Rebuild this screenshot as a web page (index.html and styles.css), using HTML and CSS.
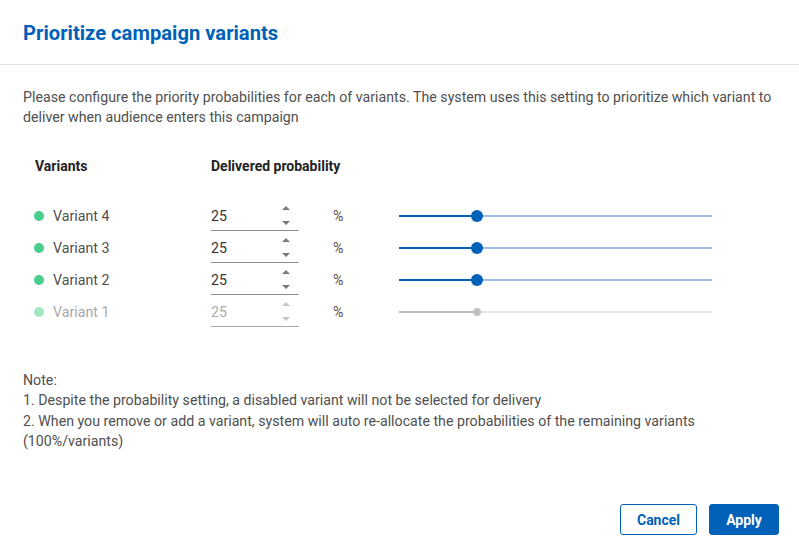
FILE: index.html
```html
<!DOCTYPE html>
<html>
<head>
<meta charset="utf-8">
<link rel="stylesheet" href="styles.css">
</head>
<body>
<div class="dialog">
  <div class="header"><h1 class="title">Prioritize campaign variants</h1></div>
  <div class="content">
    <p class="intro">Please configure the priority probabilities for each of variants. The system uses this setting to prioritize which variant to deliver when audience enters this campaign</p>
    <div class="table-head">
      <div class="col-name">Variants</div>
      <div class="col-prob">Delivered probability</div>
    </div>
    <div class="rows">
      <div class="row">
        <div class="col-name"><span class="dot"></span>Variant 4</div>
        <div class="col-prob input"><span class="val">25</span><span class="spin"><i class="up"></i><i class="down"></i></span></div>
        <div class="col-pct">%</div>
        <div class="slider"><span class="fill" style="width:25%"></span><span class="thumb" style="left:25%"></span></div>
      </div>
      <div class="row">
        <div class="col-name"><span class="dot"></span>Variant 3</div>
        <div class="col-prob input"><span class="val">25</span><span class="spin"><i class="up"></i><i class="down"></i></span></div>
        <div class="col-pct">%</div>
        <div class="slider"><span class="fill" style="width:25%"></span><span class="thumb" style="left:25%"></span></div>
      </div>
      <div class="row">
        <div class="col-name"><span class="dot"></span>Variant 2</div>
        <div class="col-prob input"><span class="val">25</span><span class="spin"><i class="up"></i><i class="down"></i></span></div>
        <div class="col-pct">%</div>
        <div class="slider"><span class="fill" style="width:25%"></span><span class="thumb" style="left:25%"></span></div>
      </div>
      <div class="row disabled">
        <div class="col-name"><span class="dot"></span>Variant 1</div>
        <div class="col-prob input"><span class="val">25</span><span class="spin"><i class="up"></i><i class="down"></i></span></div>
        <div class="col-pct">%</div>
        <div class="slider"><span class="fill" style="width:25%"></span><span class="thumb" style="left:25%"></span></div>
      </div>
    </div>
    <div class="note">
      <div>Note:</div>
      <div>1. Despite the probability setting, a disabled variant will not be selected for delivery</div>
      <div>2. When you remove or add a variant, system will auto re-allocate the probabilities of the remaining variants (100%/variants)</div>
    </div>
  </div>
  <div class="footer">
    <button class="btn btn-outline">Cancel</button>
    <button class="btn btn-primary">Apply</button>
  </div>
</div>
</body>
</html>
```

FILE: styles.css
```css
* { box-sizing: border-box; }
html, body { margin: 0; padding: 0; background: #fff; }
body { font-family: Roboto, "Noto Sans", Arial, sans-serif; color: #505050; font-size: 14.2px; }
.dialog { width: 799px; height: 552px; display: flex; flex-direction: column; }
.header { height: 65px; border-bottom: 1px solid #e3e3e3; padding: 21px 23px 0; }
.title { margin: 0; font-size: 20.2px; line-height: 24px; font-weight: 700; color: #0061b8; }
.content { padding: 0 23px; }
.intro { margin: 22px 0 0; line-height: 20px; }
.table-head { display: flex; margin-top: 29px; line-height: 20px; font-size: 14px; font-weight: 700; color: #222; }
.table-head .col-name { padding-left: 12px; }
.table-head .col-prob { white-space: nowrap; }
.col-name { width: 188px; display: flex; align-items: center; }
.col-prob { width: 88px; }
.rows { margin-top: 23px; }
.row { display: flex; align-items: center; height: 32px; }
.row .col-name { padding-left: 11px; height: 32px; padding-top: 1px; }
.dot { width: 10px; height: 10px; border-radius: 50%; background: #48cf8b; margin-right: 9px; flex: none; }
.input { height: 32px; border-bottom: 1px solid #8c8c8c; display: flex; align-items: center; justify-content: space-between; color: #333; }
.val { line-height: 20px; padding-top: 2px; }
.spin { display: flex; flex-direction: column; justify-content: space-between; height: 20px; margin-right: 9px; padding-top: 1px; }
.spin i { display: block; width: 0; height: 0; border-left: 4px solid transparent; border-right: 4px solid transparent; }
.spin .up { border-bottom: 4px solid #7a7a7a; }
.spin .down { border-top: 4px solid #7a7a7a; }
.col-pct { width: 100px; padding-left: 34px; padding-top: 1px; }
.slider { position: relative; width: 313px; height: 2px; background: #9fc0e6; margin-top: 1px; }
.slider .fill { position: absolute; left: 0; top: 0; height: 2px; background: #0061b8; }
.slider .thumb { position: absolute; top: 1px; width: 12px; height: 12px; margin: -6px 0 0 -6px; border-radius: 50%; background: #0061b8; }
.row.disabled .col-name { color: #a8a8a8; }
.row.disabled .dot { background: #a2e6c4; }
.row.disabled .input { color: #aaa; border-bottom-color: #a8a8a8; }
.row.disabled .spin .up { border-bottom-color: #c8c8c8; }
.row.disabled .spin .down { border-top-color: #c8c8c8; }
.row.disabled .slider { background: #e6e6e6; }
.row.disabled .slider .fill { background: #bdbdbd; }
.row.disabled .slider .thumb { width: 8px; height: 8px; margin: -4px 0 0 -4px; background: #c2c2c2; }
.note { margin-top: 43px; line-height: 20.4px; padding-right: 60px; }
.footer { margin-top: auto; padding: 0 20px 17px 0; display: flex; justify-content: flex-end; gap: 12px; }
.btn { height: 31px; border-radius: 3px; font-family: Roboto, Arial, sans-serif; font-size: 14px; font-weight: 700; padding: 0; cursor: pointer; }
.btn-outline { width: 77px; background: #fff; color: #0061b8; border: 1px solid #0061b8; }
.btn-primary { width: 70px; background: #0061b8; color: #fff; border: 1px solid #0061b8; }
```
